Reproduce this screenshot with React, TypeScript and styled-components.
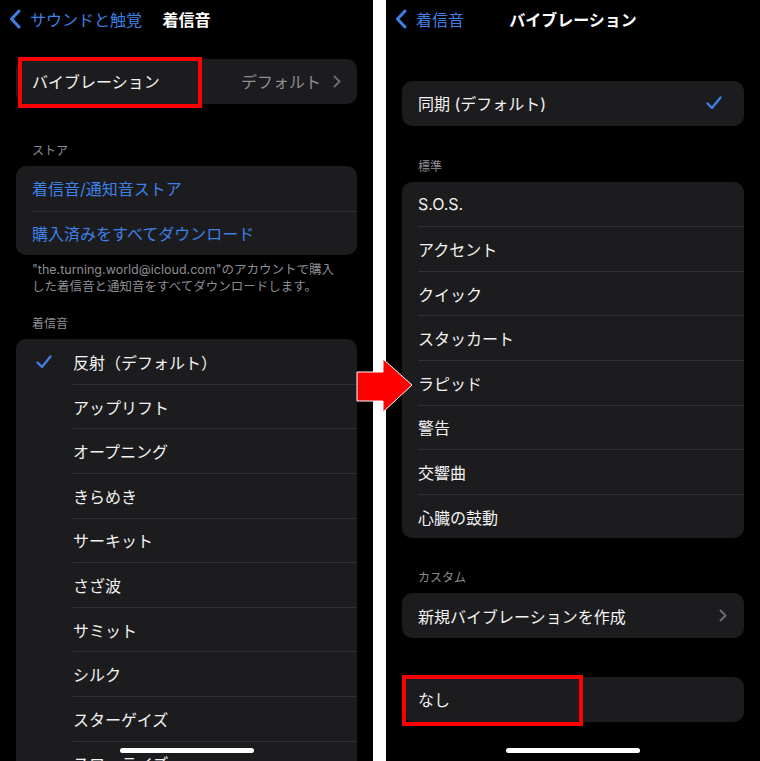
import React from 'react';
import styled, { createGlobalStyle } from 'styled-components';

const GlobalStyle = createGlobalStyle`
  html, body {
    margin: 0;
    padding: 0;
    background: #ffffff;
  }
  body {
    font-family: Inter, "Noto Sans CJK JP", "Noto Sans", sans-serif;
    -webkit-font-smoothing: antialiased;
  }
`;

const BLUE = '#3d80e6';
const GRAY = '#8d8d93';

const Frame = styled.div`
  position: relative;
  display: flex;
  gap: 13px;
  width: 760px;
  height: 761px;
  overflow: hidden;
  background: #ffffff;
`;

const Screen = styled.div<{ $width?: number }>`
  position: relative;
  display: flex;
  flex-direction: column;
  width: ${(p) => (p.$width ? `${p.$width}px` : 'auto')};
  flex: ${(p) => (p.$width ? 'none' : '1')};
  height: 100%;
  overflow: hidden;
  background: #000000;
  padding: 0 16px;
  box-sizing: border-box;

  & > * {
    flex-shrink: 0;
  }
`;

const NavBar = styled.div`
  display: grid;
  grid-template-columns: 1fr auto 1fr;
  align-items: center;
  height: 38px;
  margin: 0 -16px;
`;

const BackLink = styled.div`
  display: flex;
  align-items: center;
  gap: 9px;
  padding-left: 9px;
  color: ${BLUE};
  font-size: 16px;
  white-space: nowrap;
`;

const NavTitle = styled.div`
  color: #ffffff;
  font-size: 16px;
  font-weight: 700;
  white-space: nowrap;
`;

const Group = styled.section<{ $top: number }>`
  margin-top: ${(p) => p.$top}px;
`;

const GroupHeader = styled.div`
  padding-left: 16px;
  margin-bottom: 7px;
  color: ${GRAY};
  font-size: 12px;
  line-height: 17px;
`;

const GroupFooter = styled.p`
  margin: 0;
  padding: 6px 16px 0;
  color: ${GRAY};
  font-size: 12.5px;
  line-height: 17px;
`;

const Card = styled.div`
  position: relative;
  background: #1c1c1e;
  border-radius: 10px;
`;

const Row = styled.div`
  display: flex;
  align-items: center;
  height: 44.6px;
  padding-left: 16px;
`;

const Lead = styled.div`
  display: flex;
  align-items: center;
  width: 41px;
  padding-left: 4px;
  box-sizing: border-box;
  align-self: stretch;
`;

const RowBody = styled.div<{ $padRight?: number }>`
  display: flex;
  align-items: center;
  flex: 1;
  height: 100%;
  box-sizing: border-box;
  padding-right: ${(p) => p.$padRight ?? 16}px;

  ${Row} + ${Row} > & {
    border-top: 1px solid #313134;
  }
`;

const Label = styled.span<{ $link?: boolean }>`
  flex: 1;
  color: ${(p) => (p.$link ? BLUE : '#f2f2f2')};
  font-size: 16px;
  white-space: nowrap;
`;

const Detail = styled.span`
  margin-right: 12px;
  color: ${GRAY};
  font-size: 16px;
`;

const Highlight = styled.div<{ $left: number; $width: number }>`
  position: absolute;
  top: -2px;
  bottom: -4px;
  left: ${(p) => p.$left}px;
  width: ${(p) => p.$width}px;
  border: 4px solid #ff0000;
  box-sizing: border-box;
  pointer-events: none;
`;

const HomeIndicator = styled.div`
  position: absolute;
  left: 50%;
  bottom: 8px;
  width: 134px;
  height: 5px;
  margin-left: -67px;
  border-radius: 3px;
  background: #ffffff;
`;

const ArrowMark = styled.svg`
  position: absolute;
  left: 356px;
  top: 357px;
`;

const BackChevron = () => (
  <svg width="12" height="20" viewBox="0 0 12 20" fill="none">
    <path d="M10 2 L2.5 10 L10 18" stroke={BLUE} strokeWidth="3" strokeLinecap="round" strokeLinejoin="round" />
  </svg>
);

const Chevron = () => (
  <svg width="8" height="13" viewBox="0 0 8 13" fill="none">
    <path d="M1.5 1.5 L6.5 6.5 L1.5 11.5" stroke="#6b6b70" strokeWidth="2" strokeLinecap="round" strokeLinejoin="round" />
  </svg>
);

const Check = () => (
  <svg width="16" height="14" viewBox="0 0 16 14" fill="none">
    <path d="M1.5 7.5 L6 12 L14.5 1.5" stroke={BLUE} strokeWidth="2.3" strokeLinecap="round" strokeLinejoin="round" />
  </svg>
);

const ringtones = [
  '反射（デフォルト）',
  'アップリフト',
  'オープニング',
  'きらめき',
  'サーキット',
  'さざ波',
  'サミット',
  'シルク',
  'スターゲイズ',
  'スローライズ',
  'ソフトチャイム',
];

const patterns = ['S.O.S.', 'アクセント', 'クイック', 'スタッカート', 'ラピッド', '警告', '交響曲', '心臓の鼓動'];

const RingtoneScreen: React.FC = () => (
  <Screen $width={373}>
    <NavBar>
      <BackLink>
        <BackChevron />
        サウンドと触覚
      </BackLink>
      <NavTitle>着信音</NavTitle>
      <span />
    </NavBar>

    <Group $top={21}>
      <Card>
        <Row>
          <RowBody>
            <Label>バイブレーション</Label>
            <Detail>デフォルト</Detail>
            <Chevron />
          </RowBody>
        </Row>
        <Highlight $left={2} $width={184} />
      </Card>
    </Group>

    <Group $top={38.5}>
      <GroupHeader>ストア</GroupHeader>
      <Card>
        <Row>
          <RowBody>
            <Label $link>着信音/通知音ストア</Label>
          </RowBody>
        </Row>
        <Row>
          <RowBody>
            <Label $link>購入済みをすべてダウンロード</Label>
          </RowBody>
        </Row>
      </Card>
      <GroupFooter>
        "the.turning.world@icloud.com"のアカウントで購入
        <br />
        した着信音と通知音をすべてダウンロードします。
      </GroupFooter>
    </Group>

    <Group $top={20}>
      <GroupHeader>着信音</GroupHeader>
      <Card>
        {ringtones.map((name, i) => (
          <Row key={name}>
            <Lead>{i === 0 && <Check />}</Lead>
            <RowBody>
              <Label>{name}</Label>
            </RowBody>
          </Row>
        ))}
      </Card>
    </Group>

    <HomeIndicator />
  </Screen>
);

const VibrationScreen: React.FC = () => (
  <Screen>
    <NavBar>
      <BackLink>
        <BackChevron />
        着信音
      </BackLink>
      <NavTitle>バイブレーション</NavTitle>
      <span />
    </NavBar>

    <Group $top={43}>
      <Card>
        <Row>
          <RowBody $padRight={22}>
            <Label>同期 (デフォルト)</Label>
            <Check />
          </RowBody>
        </Row>
      </Card>
    </Group>

    <Group $top={32}>
      <GroupHeader>標準</GroupHeader>
      <Card>
        {patterns.map((name) => (
          <Row key={name}>
            <RowBody>
              <Label>{name}</Label>
            </RowBody>
          </Row>
        ))}
      </Card>
    </Group>

    <Group $top={31}>
      <GroupHeader>カスタム</GroupHeader>
      <Card>
        <Row>
          <RowBody $padRight={17}>
            <Label>新規バイブレーションを作成</Label>
            <Chevron />
          </RowBody>
        </Row>
      </Card>
    </Group>

    <Group $top={39}>
      <Card>
        <Row>
          <RowBody>
            <Label>なし</Label>
          </RowBody>
        </Row>
        <Highlight $left={0} $width={181} />
      </Card>
    </Group>

    <HomeIndicator />
  </Screen>
);

const App: React.FC = () => (
  <>
    <GlobalStyle />
    <Frame>
      <RingtoneScreen />
      <VibrationScreen />
      <ArrowMark width="58" height="58" viewBox="0 0 58 58">
        <polygon
          points="1,15 27,15 27,2 56,28 27,55 27,44 1,44"
          fill="#ff0000"
          stroke="#ffffff"
          strokeWidth="1"
          strokeLinejoin="miter"
        />
      </ArrowMark>
    </Frame>
  </>
);

export default App;
